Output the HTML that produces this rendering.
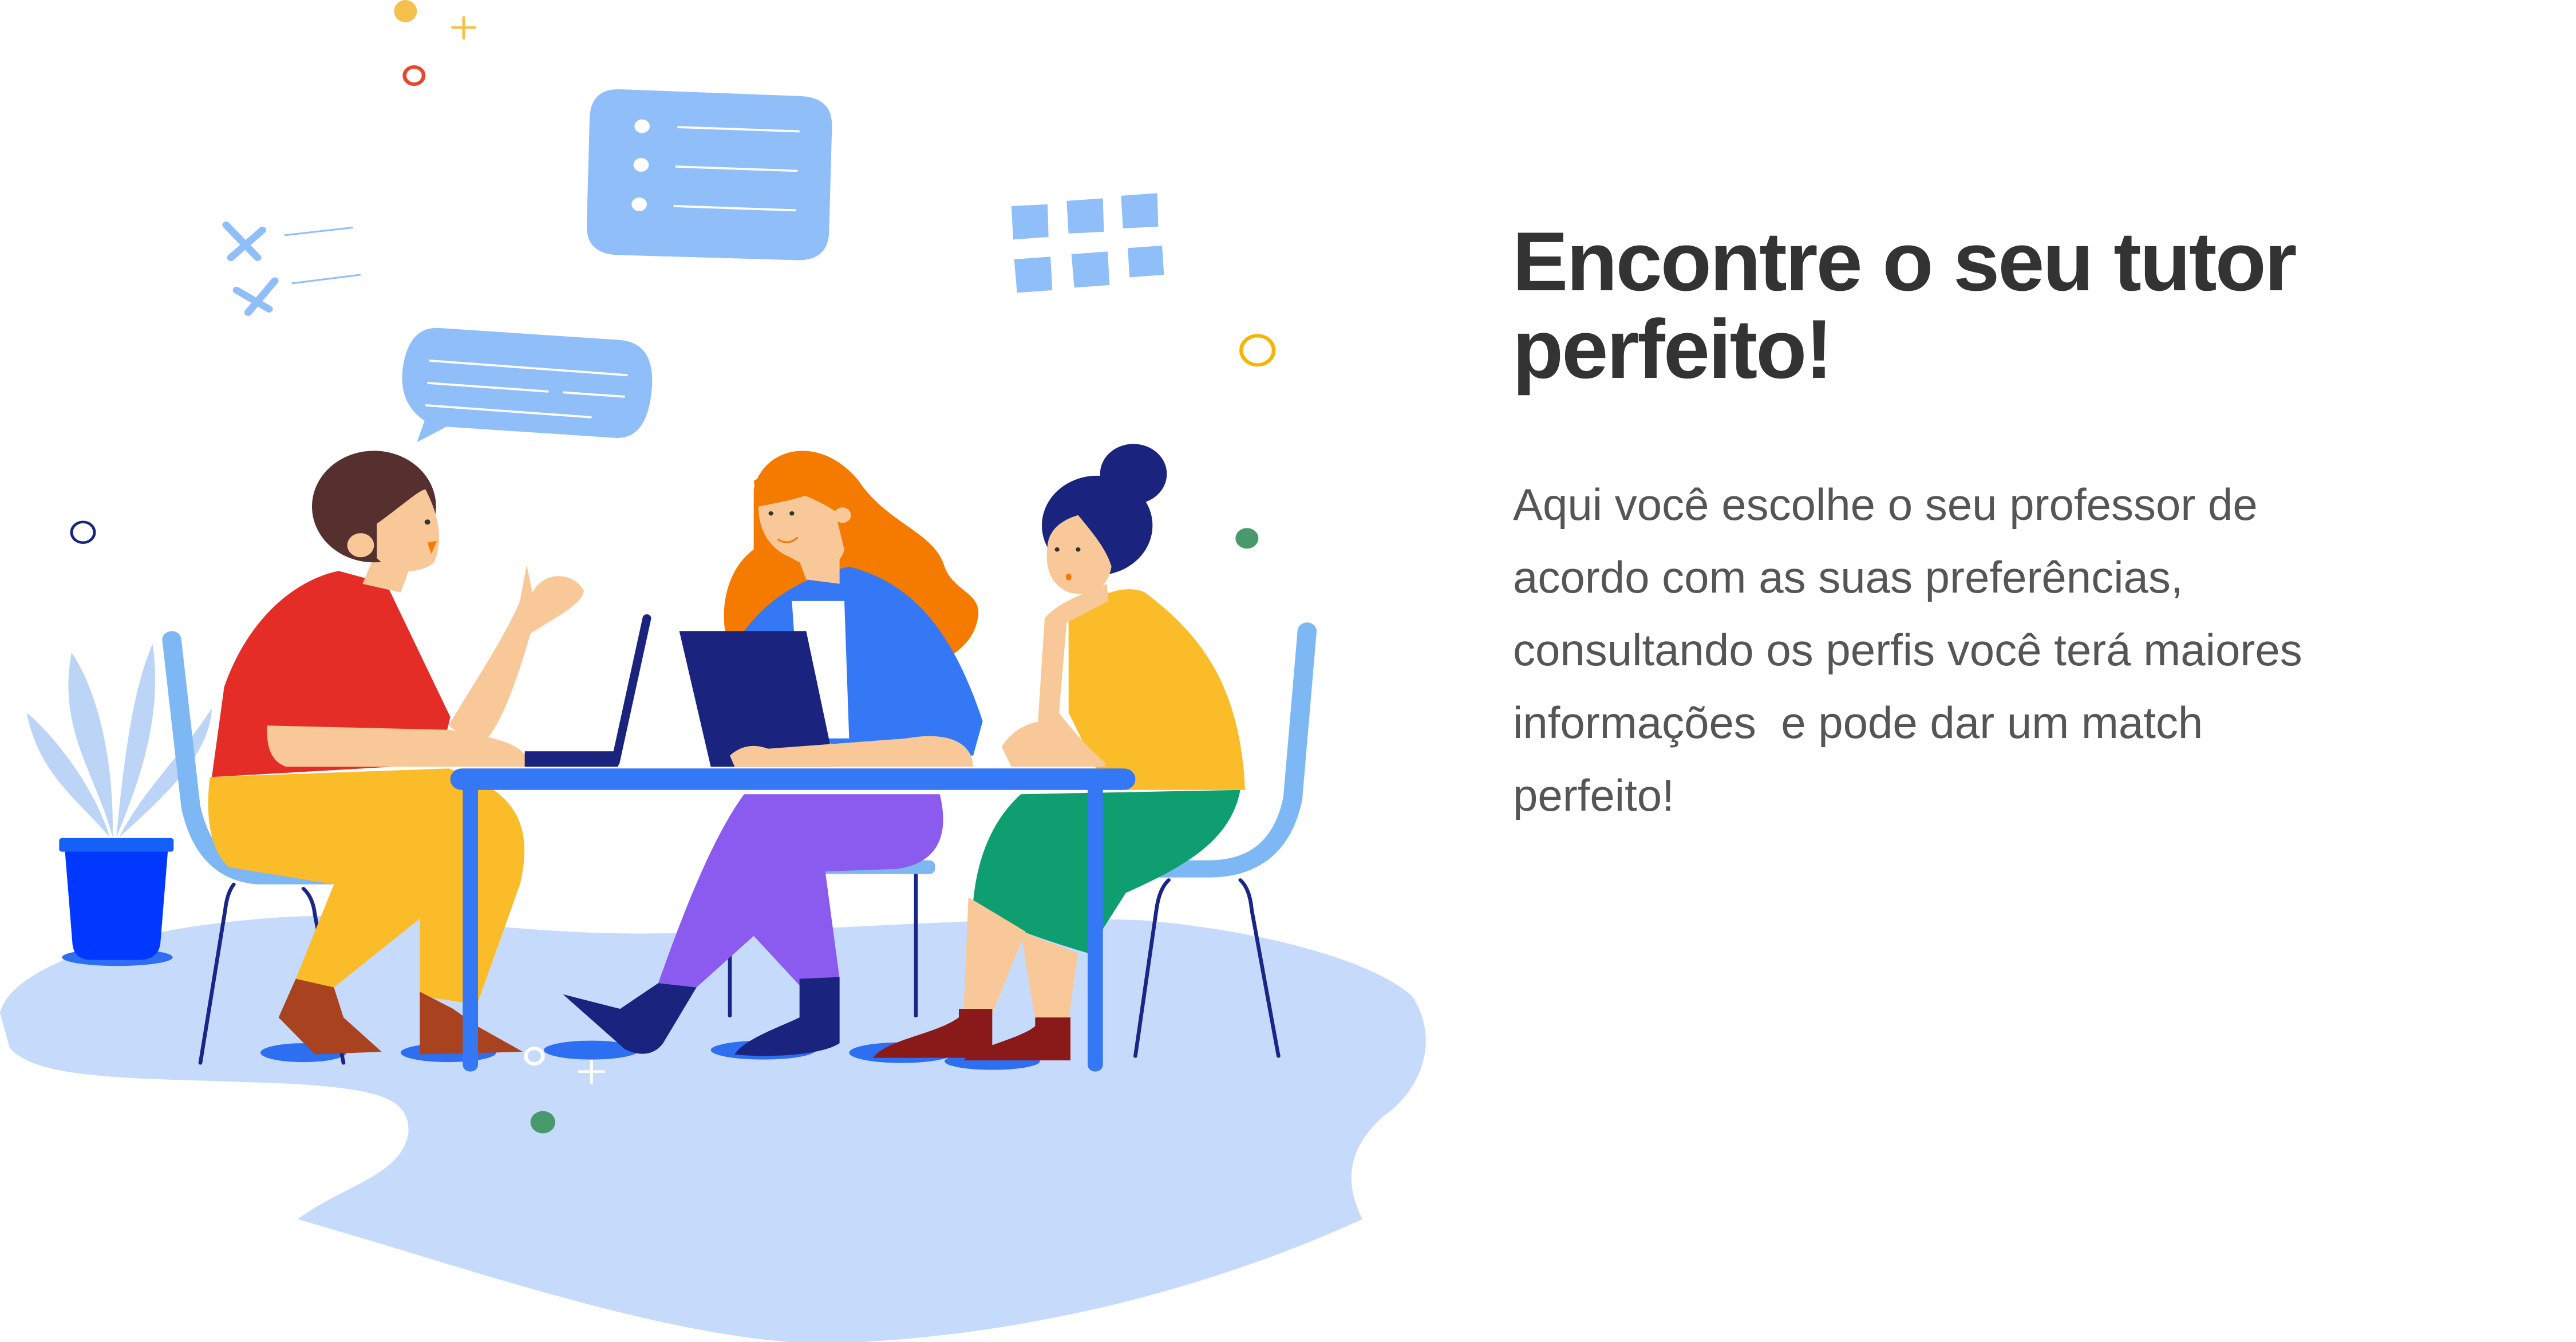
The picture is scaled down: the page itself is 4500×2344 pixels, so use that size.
<!DOCTYPE html>
<html><head><meta charset="utf-8"><style>
html,body{margin:0;padding:0;background:#fff;}
body{width:4500px;height:2344px;position:relative;overflow:hidden;}
svg{position:absolute;left:0;top:0;}
h1{position:absolute;left:2642px;top:380px;margin:0;font-family:"Liberation Sans",sans-serif;font-weight:bold;font-size:146px;line-height:153px;color:#333;letter-spacing:-3px;width:1700px;white-space:nowrap;}
p{position:absolute;left:2643px;top:818px;margin:0;font-family:"Liberation Sans",sans-serif;font-size:78px;line-height:127px;color:#555;width:1700px;white-space:nowrap;}
</style></head><body>
<svg width="2600" height="2344" viewBox="0 0 1560 1563" preserveAspectRatio="none">
<path fill="#C6DBFB" d="M0 1180 C10 1130 120 1080 300 1068 C450 1060 520 1090 700 1087 C900 1083 1050 1065 1200 1072 C1330 1085 1440 1120 1480 1160 C1510 1210 1490 1270 1450 1300 C1410 1340 1410 1380 1428 1420 C1250 1510 1050 1560 860 1565 C700 1560 500 1480 312 1420 C360 1380 420 1370 428 1320 C430 1280 400 1268 300 1262 C150 1255 40 1260 10 1220 Z"/>
<path fill="#8FBEF9" d="M650 104 L840 112 Q873 114 872 148 L869 270 Q868 304 835 303 L648 297 Q614 296 615 262 L618 138 Q619 103 650 104 Z"/>
<g fill="#fff"><circle cx="673" cy="147" r="8"/><circle cx="672" cy="192" r="8"/><circle cx="670" cy="238" r="8"/></g>
<g stroke="#fff" stroke-width="2.5"><line x1="710" y1="148" x2="838" y2="153"/><line x1="708" y1="194" x2="836" y2="199"/><line x1="706" y1="240" x2="834" y2="245"/></g>
<path fill="#8FBEF9" d="M460 382 L650 396 Q688 400 683 455 Q678 512 645 510 L468 497 L437 515 L445 490 Q418 470 422 430 Q428 380 460 382 Z"/>
<g stroke="#fff" stroke-width="2.5"><line x1="450" y1="420" x2="658" y2="437"/><line x1="448" y1="446" x2="575" y2="456"/><line x1="590" y1="457" x2="655" y2="462"/><line x1="446" y1="472" x2="620" y2="486"/></g>
<g fill="#8FBEF9"><path d="M1060 240 L1098 238 L1099 276 L1062 279Z"/><path d="M1118 234 L1156 231 L1157 270 L1120 272Z"/><path d="M1175 228 L1213 225 L1214 264 L1177 266Z"/><path d="M1063 302 L1101 299 L1103 338 L1066 341Z"/><path d="M1123 296 L1161 293 L1163 332 L1126 335Z"/><path d="M1182 289 L1218 286 L1220 320 L1184 323Z"/></g>
<g stroke="#8FBEF9" stroke-width="8" stroke-linecap="round"><line x1="237" y1="262" x2="270" y2="300"/><line x1="275" y1="268" x2="242" y2="300"/><line x1="248" y1="338" x2="282" y2="360"/><line x1="288" y1="327" x2="260" y2="364"/></g>
<g stroke="#8FBEF9" stroke-width="2"><line x1="298" y1="274" x2="370" y2="265"/><line x1="306" y1="330" x2="378" y2="320"/></g>
<ellipse cx="425" cy="13" rx="12" ry="13" fill="#F4C04E"/>
<g stroke="#F4C04E" stroke-width="3"><line x1="473" y1="32" x2="499" y2="32"/><line x1="486" y1="19" x2="486" y2="46"/></g>
<circle cx="434" cy="88" r="10" fill="none" stroke="#E8472C" stroke-width="4"/>
<circle cx="87" cy="620" r="12" fill="none" stroke="#1A237E" stroke-width="3"/>
<circle cx="1318" cy="408" r="17" fill="none" stroke="#F7B500" stroke-width="4"/>
<circle cx="1307" cy="627" r="12" fill="#48996C"/>
<circle cx="569" cy="1307" r="13" fill="#48996C"/>
<circle cx="560" cy="1230" r="9" fill="none" stroke="#fff" stroke-width="4"/>
<g stroke="#fff" stroke-width="3"><line x1="606" y1="1248" x2="634" y2="1248"/><line x1="620" y1="1234" x2="620" y2="1262"/></g>
<g fill="#BCD4F5">
<path d="M118 975 C100 900 60 850 75 760 C100 800 120 880 118 975Z"/>
<path d="M122 975 C130 880 140 800 160 750 C170 830 150 900 122 975Z"/>
<path d="M115 975 C80 930 40 900 28 830 C60 860 100 920 115 975Z"/>
<path d="M125 975 C150 920 190 880 222 825 C220 880 170 930 125 975Z"/>
</g>
<ellipse cx="123" cy="1115" rx="58" ry="10" fill="#2E6EF0"/>
<path fill="#0038FF" d="M68 990 L176 990 L168 1100 Q165 1118 145 1118 L96 1118 Q78 1118 76 1100 Z"/>
<rect x="62" y="976" width="120" height="16" rx="3" fill="#1560F5"/>
<g fill="#2E6EF0"><ellipse cx="318" cy="1226" rx="45" ry="11"/><ellipse cx="470" cy="1226" rx="50" ry="11"/><ellipse cx="620" cy="1223" rx="50" ry="11"/><ellipse cx="800" cy="1223" rx="55" ry="11"/><ellipse cx="945" cy="1226" rx="55" ry="12"/><ellipse cx="1040" cy="1236" rx="50" ry="10"/></g>
<g stroke="#1B2585" stroke-width="4" fill="none" stroke-linecap="round">
<path d="M245 1030 Q238 1040 236 1060 L210 1238"/><path d="M318 1035 Q328 1045 330 1065 L360 1238"/>
<path d="M1225 1025 Q1215 1035 1212 1060 L1190 1230"/><path d="M1300 1025 Q1310 1035 1312 1060 L1340 1230"/>
<line x1="960" y1="1018" x2="960" y2="1183"/><line x1="765" y1="1110" x2="765" y2="1183"/>
</g>
<path d="M180 745 L200 940 Q215 1015 270 1020 L392 1020" stroke="#7DB8F5" stroke-width="20" fill="none" stroke-linecap="round"/>
<path d="M1370 735 L1355 930 Q1340 1010 1270 1012 L1195 1012" stroke="#7DB8F5" stroke-width="20" fill="none" stroke-linecap="round"/>
<rect x="860" y="1002" width="120" height="16" rx="6" fill="#7DB8F5"/>
<path fill="#FBBC2A" d="M220 905 L470 895 C540 920 560 960 545 1030 L500 1170 L440 1160 L440 1070 L350 1150 L310 1140 L350 1030 L240 1010 C220 990 215 950 220 905Z"/>
<path fill="#A8421F" d="M310 1140 L350 1150 L360 1185 L400 1225 L330 1228 L292 1185Z"/>
<path fill="#A8421F" d="M440 1155 L475 1175 L500 1195 L548 1225 L440 1228 Z"/>
<path fill="#E52D27" d="M222 905 L235 800 C260 720 310 675 355 665 L405 680 L472 835 L460 890 Z"/>
<path fill="#F8C898" d="M470 845 C500 790 530 740 545 700 L552 658 L558 690 C570 665 600 665 612 688 C610 705 580 720 556 738 C540 800 520 860 500 870 Z"/>
<path fill="#F8C898" d="M280 845 L470 850 C530 860 555 870 553 893 L300 893 Q278 885 280 845Z"/>
<path fill="#F8C898" d="M395 640 L380 680 L420 690 L430 660Z"/>
<circle cx="392" cy="590" r="65" fill="#55302E"/>
<path fill="#F8C898" d="M395 610 C420 590 440 570 446 570 C460 600 465 630 455 655 C440 670 410 668 395 650Z"/>
<circle cx="378" cy="635" r="14" fill="#F8C898"/>
<circle cx="448" cy="608" r="3" fill="#333"/>
<path fill="#F57A00" d="M448 632 L458 630 L452 645Z"/>
<line x1="678" y1="720" x2="645" y2="888" stroke="#1A237E" stroke-width="9" stroke-linecap="round"/>
<rect x="550" y="875" width="98" height="18" fill="#1A237E"/>
<path fill="#F57A00" d="M790 570 C800 520 860 505 900 560 C930 610 980 620 990 660 C1000 690 1030 690 1025 720 C1020 750 1000 760 990 770 L760 735 C755 700 765 660 790 640 Z"/>
<path fill="#3478F5" d="M780 735 C810 690 850 670 890 660 C960 680 1000 740 1030 840 L1020 880 L880 880 Z"/>
<path fill="#fff" d="M830 700 L885 700 L890 860 L840 860Z"/>
<path fill="#F8C898" d="M795 590 C800 560 840 570 875 595 L885 640 C880 665 850 665 830 650 C808 640 795 620 795 590Z"/>
<circle cx="883" cy="600" r="9" fill="#F8C898"/>
<path fill="#F8C898" d="M835 645 L845 675 L880 680 L880 640Z"/>
<path fill="#F57A00" d="M790 560 C820 540 850 545 865 565 C850 580 815 585 795 590Z"/>
<circle cx="808" cy="598" r="2.5" fill="#333"/><circle cx="830" cy="598" r="2.5" fill="#333"/>
<path d="M815 628 Q826 636 836 626" stroke="#F57A00" stroke-width="2" fill="none"/>
<polygon fill="#1A237E" points="712,735 845,735 875,893 745,893"/>
<path fill="#8B5AEE" d="M780 925 L985 925 C995 970 985 1005 940 1012 L865 1015 L880 1140 L840 1150 L790 1090 L730 1150 L690 1145 C720 1050 750 970 780 925Z"/>
<path fill="#F8C898" d="M765 880 C780 865 795 868 805 872 L950 860 C1000 850 1020 870 1020 893 L770 893Z"/>
<path fill="#1A237E" d="M590 1158 L650 1175 L690 1145 L730 1150 L695 1215 C685 1230 670 1230 655 1222 Z"/>
<path fill="#1A237E" d="M838 1140 L880 1138 L880 1215 C860 1230 800 1232 770 1228 C780 1210 820 1195 838 1185Z"/>
<path fill="#0E9E6F" d="M1070 925 L1300 920 C1290 980 1240 1010 1180 1040 L1140 1110 C1080 1090 1030 1070 1020 1050 C1025 990 1045 950 1070 925Z"/>
<path fill="#F8C898" d="M1015 1045 L1075 1085 L1040 1180 L1010 1180 Z"/>
<path fill="#F8C898" d="M1070 1085 L1130 1110 L1120 1188 L1085 1188 Z"/>
<path fill="#8A1A1A" d="M1005 1175 L1040 1175 L1040 1232 L915 1232 C930 1210 980 1205 1005 1185Z"/>
<path fill="#8A1A1A" d="M1085 1185 L1122 1185 L1122 1235 L1010 1235 C1020 1220 1070 1210 1085 1195Z"/>
<path fill="#FBBC2A" d="M1120 720 C1150 690 1180 680 1200 690 C1260 740 1300 800 1305 920 L1160 920 L1120 830Z"/>
<path fill="#F8C898" d="M1085 890 L1095 720 C1110 700 1140 690 1160 680 L1162 700 L1118 725 L1110 830 C1130 860 1150 880 1160 890Z"/>
<path fill="#F8C898" d="M1050 870 C1060 850 1080 840 1095 840 L1160 893 L1060 893Z"/>
<circle cx="1150" cy="612" r="58" fill="#1A237E"/>
<circle cx="1188" cy="552" r="35" fill="#1A237E"/>
<path fill="#F8C898" d="M1098 635 C1100 615 1115 605 1130 600 C1145 620 1160 640 1165 660 C1160 690 1140 695 1120 690 C1100 680 1095 660 1098 635Z"/>
<circle cx="1108" cy="640" r="2.5" fill="#333"/><circle cx="1130" cy="640" r="2.5" fill="#333"/>
<ellipse cx="1120" cy="672" rx="3" ry="4" fill="#F57A00"/>
<rect x="472" y="895" width="718" height="25" rx="12" fill="#3478F5"/>
<rect x="485" y="905" width="16" height="343" rx="8" fill="#3478F5"/>
<rect x="1140" y="905" width="16" height="343" rx="8" fill="#3478F5"/>
</svg>
<h1>Encontre o seu tutor<br>perfeito!</h1>
<p>Aqui você escolhe o seu professor de<br>acordo com as suas preferências,<br>consultando os perfis você terá maiores<br>informações&nbsp; e pode dar um match<br>perfeito!</p>
</body></html>
